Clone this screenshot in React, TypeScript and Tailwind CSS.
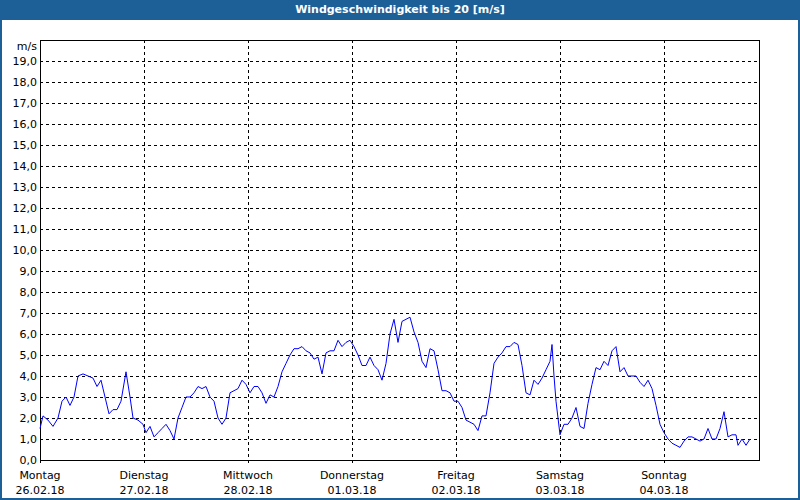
import React from 'react';

const DATA: [number, number][] = [
  [40,1.5],[43,2.1],[48,1.9],[53,1.6],[58,2.0],[62,2.8],[66,3.0],[70,2.6],[74,3.0],[78,4.0],[83,4.1],[88,4.0],[93,3.9],[97,3.5],[101,3.8],[105,3.0],[109,2.2],[113,2.4],[117,2.4],[121,2.8],[126,4.2],[130,3.0],[133,2.0],[138,1.9],[143,1.7],[146,1.3],[150,1.6],[154,1.1],[158,1.3],[162,1.5],[166,1.7],[170,1.4],[174,1.0],[178,2.0],[182,2.5],[186,3.0],[190,3.0],[194,3.2],[198,3.5],[202,3.4],[206,3.5],[210,3.0],[214,2.8],[218,2.0],[222,1.7],[226,2.0],[230,3.2],[234,3.3],[238,3.4],[242,3.8],[246,3.6],[250,3.2],[254,3.5],[258,3.5],[262,3.2],[266,2.7],[270,3.1],[274,3.0],[278,3.5],[282,4.2],[286,4.6],[290,5.0],[294,5.3],[298,5.3],[302,5.4],[306,5.2],[310,5.1],[314,4.8],[318,4.9],[322,4.1],[326,5.1],[330,5.2],[334,5.2],[338,5.7],[342,5.4],[346,5.6],[350,5.7],[354,5.4],[358,5.0],[362,4.5],[366,4.5],[370,4.9],[374,4.5],[378,4.3],[382,3.8],[386,4.6],[390,6.0],[394,6.7],[398,5.6],[402,6.6],[406,6.7],[410,6.8],[414,6.1],[418,5.6],[422,4.7],[426,4.4],[430,5.3],[434,5.2],[438,4.3],[442,3.3],[446,3.3],[450,3.2],[454,2.8],[458,2.8],[462,2.5],[466,1.9],[470,1.8],[474,1.7],[478,1.4],[482,2.1],[486,2.1],[490,3.2],[494,4.6],[498,4.9],[502,5.1],[506,5.4],[510,5.4],[514,5.6],[518,5.5],[522,4.5],[526,3.2],[530,3.1],[534,3.8],[538,3.6],[542,3.9],[546,4.3],[550,4.7],[552,5.5],[554,4.0],[556,2.8],[560,1.2],[564,1.7],[568,1.7],[572,2.0],[576,2.5],[580,1.6],[584,1.5],[588,2.7],[592,3.6],[596,4.4],[600,4.3],[604,4.7],[608,4.5],[612,5.2],[616,5.4],[620,4.2],[624,4.4],[628,4.0],[632,4.0],[636,4.0],[640,3.7],[644,3.5],[648,3.8],[652,3.4],[656,2.6],[660,1.7],[664,1.3],[668,1.0],[672,0.8],[676,0.7],[680,0.6],[684,0.9],[688,1.1],[692,1.1],[696,1.0],[700,0.9],[704,1.0],[708,1.5],[712,1.0],[716,1.0],[720,1.5],[724,2.3],[728,1.1],[732,1.2],[736,1.2],[738,0.7],[742,1.0],[746,0.7],[750,1.0],
];

const DAYS = [
  ['Montag', '26.02.18'],
  ['Dienstag', '27.02.18'],
  ['Mittwoch', '28.02.18'],
  ['Donnerstag', '01.03.18'],
  ['Freitag', '02.03.18'],
  ['Samstag', '03.03.18'],
  ['Sonntag', '04.03.18'],
];

const yOf = (v: number) => 460 - 21 * v;

export default function App() {
  const ticks = Array.from({ length: 20 }, (_, i) => i);
  const line = DATA.map(([x, v]) => `${x},${yOf(v).toFixed(1)}`).join(' ');

  return (
    <div className="w-[800px] h-[500px] bg-white flex flex-col" style={{ fontFamily: '"DejaVu Sans", Tahoma, sans-serif' }}>
      <div className="h-[20px] bg-[#1d6097] text-white text-[11px] font-bold flex items-center justify-center">
        Windgeschwindigkeit bis 20 [m/s]
      </div>
      <div className="flex-1 border-x-2 border-b-2 border-[#1d6097] overflow-hidden">
        <svg width="796" height="478" viewBox="2 20 796 478" className="block text-[11px]" fontFamily='"DejaVu Sans", Tahoma, sans-serif'>
          {ticks.slice(1).map((i) => (
            <line key={i} x1={40} x2={760} y1={yOf(i) + 0.5} y2={yOf(i) + 0.5} stroke="#000" strokeDasharray="3 3" />
          ))}
          {DAYS.slice(1).map((_, i) => (
            <line key={i} x1={144 + i * 104 + 0.5} x2={144 + i * 104 + 0.5} y1={40} y2={466} stroke="#000" strokeDasharray="3 3" />
          ))}
          <line x1={40.5} x2={40.5} y1={40} y2={466} stroke="#000" strokeDasharray="3 3" />
          <rect x={40.5} y={40.5} width={719} height={420} fill="none" stroke="#000" />
          <polyline points={line} fill="none" stroke="#0000ff" strokeWidth={1} />
          <text x={37} y={50} textAnchor="end" fill="#000" fontSize="11">m/s</text>
          {ticks.map((i) => (
            <text key={i} x={37} y={yOf(i) + 4} textAnchor="end" fill="#000" fontSize="11">
              {i},0
            </text>
          ))}
          {DAYS.map(([d, dt], i) => (
            <g key={d}>
              <text x={40 + i * 104} y={479} textAnchor="middle" fill="#000" fontSize="11">{d}</text>
              <text x={40 + i * 104} y={494} textAnchor="middle" fill="#000" fontSize="11">{dt}</text>
            </g>
          ))}
        </svg>
      </div>
    </div>
  );
}
